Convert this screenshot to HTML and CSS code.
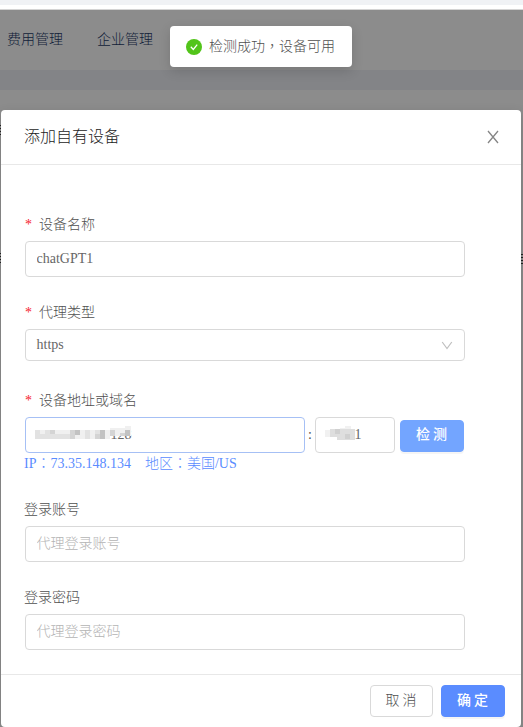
FILE: index.html
```html
<!DOCTYPE html>
<html lang="zh-CN">
<head>
  <meta charset="UTF-8">
  <title>添加自有设备</title>
  <link rel="stylesheet" href="styles.css">
</head>
<body>
  <div class="browser-edge"></div>
  <nav class="navbar">
    <a class="nav-item">费用管理</a>
    <a class="nav-item">企业管理</a>
  </nav>
  <div class="page-gap"></div>

  <main class="page">
    <span class="sliver sliver-title"></span>
    <span class="sliver sliver-left"></span>
    <span class="sliver sliver-right"></span>
    <div class="modal">
      <header class="modal-header">
        <h1>添加自有设备</h1>
        <svg class="icon-close" width="12" height="14" viewBox="0 0 12 14">
          <path d="M1 1L11 13M11 1L1 13" />
        </svg>
      </header>

      <form class="modal-body">
        <div class="form-item">
          <label class="required" for="name">设备名称</label>
          <input type="text" id="name" value="chatGPT1">
        </div>

        <div class="form-item">
          <label class="required">代理类型</label>
          <div class="select">
            <span>https</span>
            <svg width="12" height="9" viewBox="0 0 12 9">
              <path d="M1.2 1L6 7.5L10.8 1" />
            </svg>
          </div>
        </div>

        <div class="form-item form-item-host">
          <label class="required">设备地址或域名</label>
          <div class="host-row">
            <div class="field host">
              <span class="host-tail">128</span>
              <svg class="mosaic" width="97" height="16" viewBox="0 0 97 16">
                <path fill="#f0f0f0" d="M0 2h75v9H0zM75 0h21v8H75zM90-2h6v3h-6z" />
                <path fill="#e2e2e2" d="M0 2h5v9H0zM10 2h10v9H10zM5 6h35v5H5zM50 2h5v9h-5zM60 2h5v9h-5z" />
                <path fill="#d4d4d4" d="M15 2h5v4h-5zM35 2h5v9h-5zM60 6h5v5h-5zM75 2h5v6h-5zM85 5h5v3h-5z" />
                <path fill="#c2c2c2" d="M40 2h5v5h-5zM65 2h5v9h-5zM90 2h5v6h-5z" />
              </svg>
            </div>
            <span class="colon">:</span>
            <div class="field port">
              <span class="port-tail">1</span>
              <svg class="mosaic" width="32" height="16" viewBox="0 0 32 16">
                <path fill="#f1f1f1" d="M0 2h30v7H0zM15 0h10v5H15zM20-2h6v4h-6z" />
                <path fill="#dedede" d="M5 1h25v8H5zM12 8h18v4H12z" />
                <path fill="#d0d0d0" d="M10 1h5v5h-5zM20 6h5v5h-5z" />
              </svg>
            </div>
            <button type="button" class="btn btn-check">检测</button>
          </div>
          <p class="result"><span>IP<i lang="zh-TW">：</i>73.35.148.134</span><span>地区<i lang="zh-TW">：</i>美国/US</span></p>
        </div>

        <div class="form-item">
          <label for="account">登录账号</label>
          <input type="text" id="account" placeholder="代理登录账号">
        </div>

        <div class="form-item">
          <label for="password">登录密码</label>
          <input type="text" id="password" placeholder="代理登录密码">
        </div>
      </form>

      <footer class="modal-footer">
        <button type="button" class="btn">取消</button>
        <button type="button" class="btn btn-primary">确定</button>
      </footer>
    </div>
  </main>

  <div class="message">
    <svg width="16" height="16" viewBox="0 0 16 16">
      <circle cx="8" cy="8" r="8" fill="#52c41a" />
      <path d="M4.8 7.8L7.3 10.4L11.2 5.6" fill="none" stroke="#fff" stroke-width="1.3" />
    </svg>
    <span>检测成功<i lang="zh-TW">，</i>设备可用</span>
  </div>
</body>
</html>
```

FILE: styles.css
```css
* {
  box-sizing: border-box;
}

body {
  margin: 0;
  height: 727px;
  overflow: hidden;
  display: flex;
  flex-direction: column;
  background: #8c8c8c;
  color: #505050;
  font: 300 14px/22px "Liberation Serif", "Noto Sans CJK SC", serif;
}

/* full-width punctuation sits in the middle of its box */
i {
  font-family: "Noto Sans CJK TC", sans-serif;
  font-style: normal;
  line-height: 1;
}

.browser-edge {
  height: 10px;
  flex: none;
  background: #fff;
  border-top: 5px solid #f0f2f5;
  border-bottom: 1px solid #d4d4d4;
}

.navbar {
  height: 60px;
  flex: none;
  display: flex;
  gap: 34px;
  padding: 19px 7px;
  color: #111c38;
}

.page-gap {
  height: 20px;
  flex: none;
  background: #838487;
}

.page {
  position: relative;
  flex: 1;
  padding: 20px 2px 0 1px;
}

/* table text that shows beside the modal */
.sliver {
  position: absolute;
  width: 2px;
  height: 10px;
  background: repeating-linear-gradient(#222 0 1px, #8c8c8c 1px 3px);
}

.sliver-title {
  top: 35px;
  left: 0;
}

.sliver-left {
  top: 163px;
  left: 0;
}

.sliver-right {
  top: 164px;
  right: 0;
}

.modal {
  position: relative;
  height: 617px;
  display: flex;
  flex-direction: column;
  background: #fff;
  border-radius: 4px;
  box-shadow: 0 4px 12px rgba(0, 0, 0, 0.15);
}

.modal-header {
  height: 55px;
  display: flex;
  align-items: center;
  justify-content: space-between;
  padding: 0 22px 0 23px;
  border-bottom: 1px solid #e8e8e8;
}

.modal-header h1 {
  margin: 0;
  font-size: 16px;
  font-weight: 300;
  color: #1c1c1c;
}

.icon-close {
  fill: none;
  stroke: #858585;
  stroke-width: 1.3;
}

.modal-body {
  height: 509px;
  padding: 48px 56px 0 24px;
}

.form-item {
  height: 88px;
}

.form-item-host {
  height: 109px;
}

label {
  display: block;
  height: 28px;
  padding-top: 1px;
  margin-left: -1px;
}

.required {
  margin-left: 0;
}

.required::before {
  content: "*";
  display: inline-block;
  width: 14px;
  color: #f5222d;
}

input,
.select,
.field {
  display: flex;
  align-items: center;
  width: 440px;
  height: 36px;
  padding: 0 11px 0 10.5px;
  border: 1px solid #d9d9d9;
  border-radius: 4px;
  background: #fff;
  font: inherit;
  color: #666;
}

input::placeholder {
  color: #b4b4b4;
}

.select {
  height: 32px;
  justify-content: space-between;
}

.select svg {
  fill: none;
  stroke: #bfbfbf;
  stroke-width: 1.2;
}

.host-row {
  display: flex;
}

.field {
  position: relative;
}

.host {
  width: 280px;
  border-color: #a6c0f5;
}

.port {
  width: 80px;
}

.mosaic {
  position: absolute;
  top: 10px;
  left: 9px;
  overflow: visible;
}

.host-tail {
  margin-left: 74px;
}

.port-tail {
  margin-left: 28px;
}

.colon {
  width: 10px;
  line-height: 36px;
  text-align: center;
}

.btn {
  width: 63px;
  height: 32px;
  padding: 0 0 1px;
  border: 1px solid #d9d9d9;
  border-radius: 4px;
  background: #fff;
  color: #505050;
  font: inherit;
  letter-spacing: 3px;
  text-indent: 2px;
}

.btn-check,
.btn-primary {
  width: 64px;
  border-color: #5a8cff;
  background: #5a8cff;
  color: #fff;
  font-weight: 500;
  box-shadow: 0 2px 0 rgba(0, 0, 0, 0.04);
}

.btn-check {
  margin: 3px 0 0 5px;
  padding-bottom: 3px;
  border-color: #73a5ff;
  background: #73a5ff;
}

.result {
  display: flex;
  gap: 14px;
  margin: 0 0 0 -1px;
  color: #5a8cff;
}

.modal-footer {
  height: 53px;
  display: flex;
  justify-content: flex-end;
  gap: 8px;
  padding: 10px 16px;
  border-top: 1px solid #e8e8e8;
}

.message {
  position: absolute;
  top: 26px;
  left: 170px;
  width: 182px;
  height: 41px;
  display: flex;
  align-items: center;
  gap: 7px;
  padding-left: 16px;
  border-radius: 4px;
  background: #fff;
  box-shadow: 0 4px 12px rgba(0, 0, 0, 0.15);
}
```
